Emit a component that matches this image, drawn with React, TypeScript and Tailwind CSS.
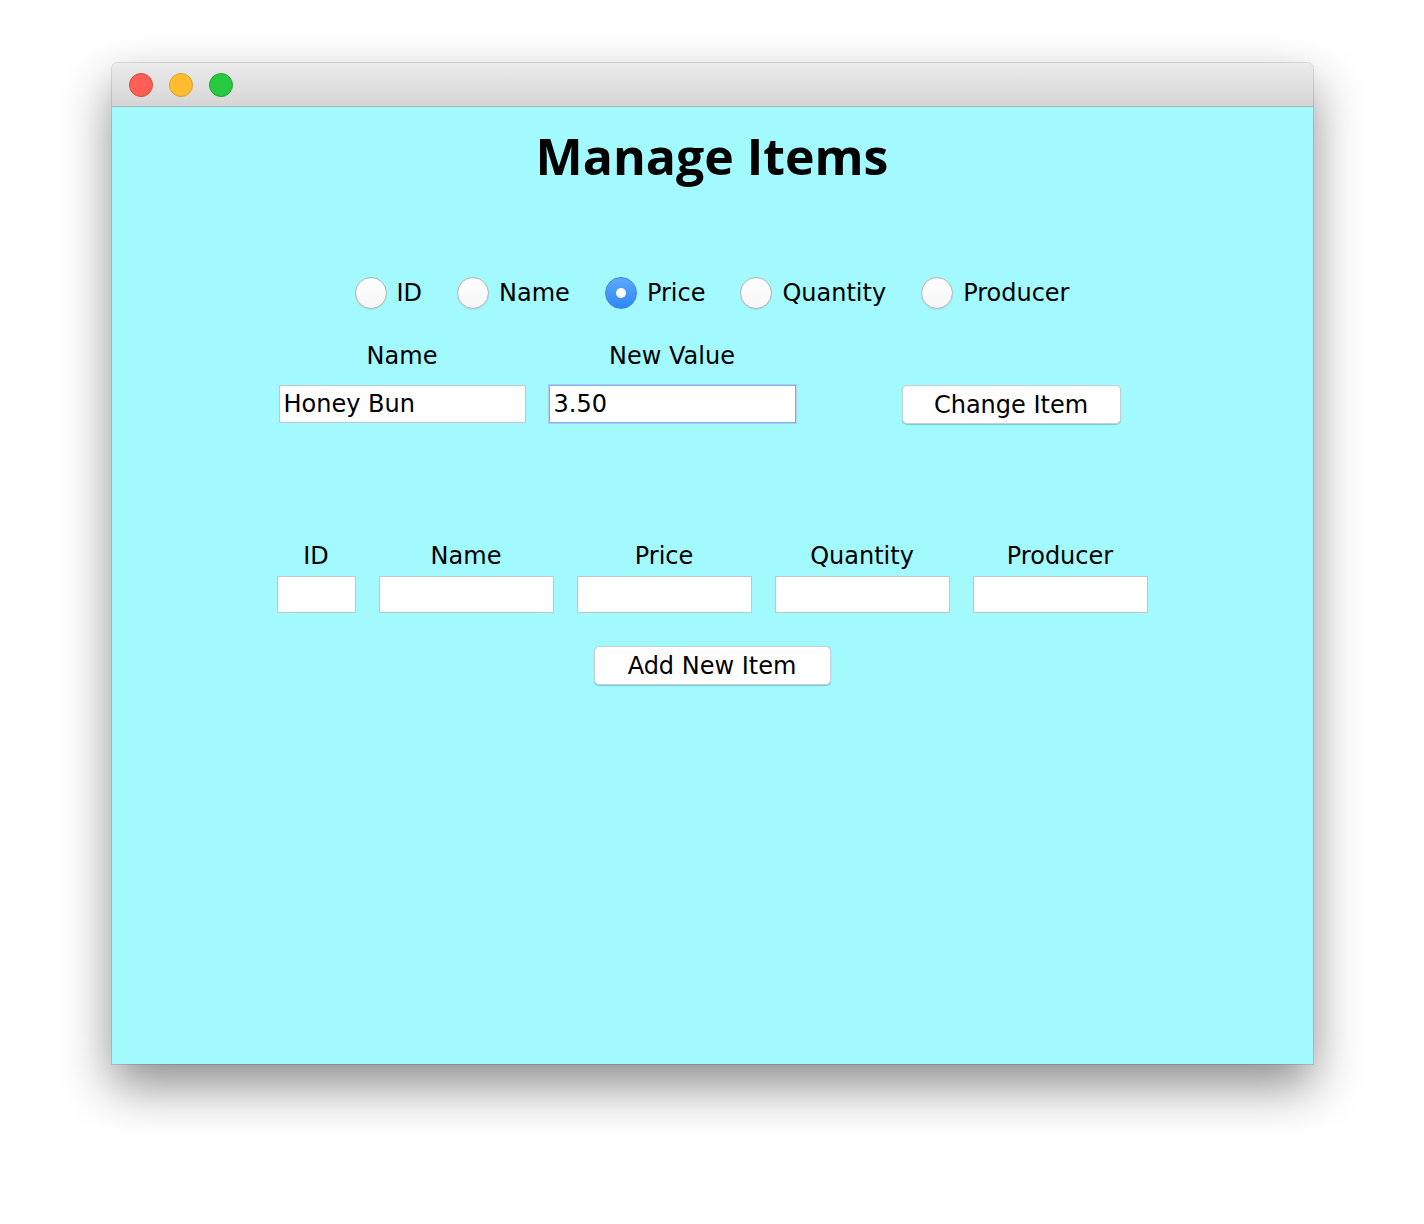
import React from 'react';

const RadioOption: React.FC<{label: string; checked?: boolean}> = ({label, checked}) => (
  <label className="flex items-center gap-[10px]">
    {checked ? (
      <span className="flex h-[32px] w-[32px] items-center justify-center rounded-full bg-gradient-to-b from-[#5aa9fc] to-[#2f86f6] border border-[#3b87e8]">
        <span className="h-[10px] w-[10px] rounded-full bg-white"></span>
      </span>
    ) : (
      <span className="h-[32px] w-[32px] rounded-full bg-gradient-to-b from-white to-[#f6f6f6] border border-[#b4b4b4] shadow-[0_1px_1px_rgba(0,0,0,0.08)]"></span>
    )}
    <span>{label}</span>
  </label>
);

const Field: React.FC<{w: string; value?: string; focused?: boolean}> = ({w, value, focused}) => (
  <div
    className={`${w} h-full bg-white px-[4px] flex items-center leading-none ${
      focused ? 'border border-[#7fb0f0] shadow-[0_0_0_1px_#a9cdf7]' : 'border border-[#bcc9cb]'
    }`}
  >
    {value}
  </div>
);

const MacButton: React.FC<{label: string; w: string}> = ({label, w}) => (
  <button className={`${w} h-[39px] rounded-[5px] bg-white border border-[#c6d0d2] shadow-[0_1px_1px_rgba(0,60,70,0.25)] text-black leading-none`}>
    {label}
  </button>
);

const App: React.FC = () => {
  return (
    <div className="min-h-[1224px] w-[1424px] bg-white pt-[63px]">
      <div className="mx-auto w-[1201px] h-[1001px] rounded-t-[6px] overflow-hidden flex flex-col shadow-[0_22px_50px_rgba(0,0,0,0.45),0_0_0_1px_rgba(0,0,0,0.12)]">
        {/* title bar */}
        <div className="h-[44px] shrink-0 bg-gradient-to-b from-[#ececec] to-[#d5d5d5] border-b border-[#b2b2b2] flex items-center pl-[17px] gap-[16px]">
          <span className="h-[24px] w-[24px] rounded-full bg-[#fe5f57] border border-[#e0443e]"></span>
          <span className="h-[24px] w-[24px] rounded-full bg-[#febc2e] border border-[#dea123]"></span>
          <span className="h-[24px] w-[24px] rounded-full bg-[#28c840] border border-[#1aab29]"></span>
        </div>

        {/* content */}
        <div
          className="flex-1 bg-[#a2f9fe] flex flex-col text-black text-[24px]"
          style={{fontFamily: '"DejaVu Sans", Verdana, sans-serif'}}
        >
          <h1
            className="h-[102px] pt-[16px] text-center text-[50px] font-bold leading-[66px]"
            style={{fontFamily: '"Open Sans", "Liberation Sans", sans-serif'}}
          >
            Manage Items
          </h1>

          <div className="mt-[64px] h-[40px] flex items-center justify-center gap-[35px] leading-none">
            <RadioOption label="ID" />
            <RadioOption label="Name" />
            <RadioOption label="Price" checked />
            <RadioOption label="Quantity" />
            <RadioOption label="Producer" />
          </div>

          <div className="mt-[28px] pl-[167px] flex gap-[23px] h-[30px] items-center leading-none">
            <div className="w-[247px] text-center">Name</div>
            <div className="w-[247px] text-center">New Value</div>
          </div>

          <div className="mt-[13px] pl-[167px] flex items-center h-[40px]">
            <div className="h-[38px] flex gap-[23px]">
              <Field w="w-[247px]" value="Honey Bun" />
              <Field w="w-[247px]" value="3.50" focused />
            </div>
            <div className="ml-[106px] mt-[1px]">
              <MacButton label="Change Item" w="w-[219px]" />
            </div>
          </div>

          <div className="mt-[115px] flex justify-center gap-[23px] leading-none">
            {[
              ['ID', 'w-[79px]'],
              ['Name', 'w-[175px]'],
              ['Price', 'w-[175px]'],
              ['Quantity', 'w-[175px]'],
              ['Producer', 'w-[175px]'],
            ].map(([label, w]) => (
              <div key={label} className={`${w} flex flex-col`}>
                <div className="h-[34px] flex items-center justify-center whitespace-nowrap">{label}</div>
                <div className="mt-[3px] h-[37px]">
                  <Field w="w-full" />
                </div>
              </div>
            ))}
          </div>

          <div className="mt-[33px] flex justify-center">
            <MacButton label="Add New Item" w="w-[237px]" />
          </div>
        </div>
      </div>
    </div>
  );
};

export default App;
